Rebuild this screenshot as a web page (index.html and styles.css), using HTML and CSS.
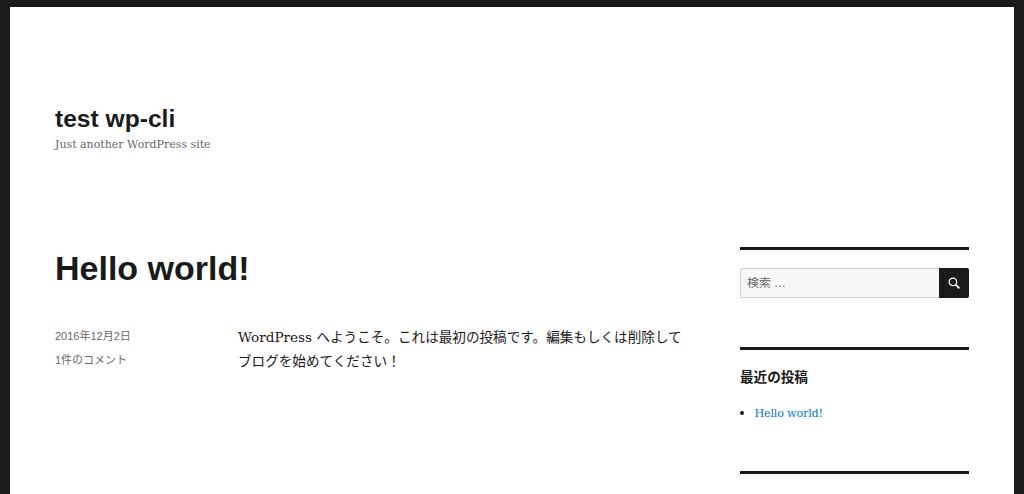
FILE: index.html
```html
<!DOCTYPE html>
<html lang="ja">
<head>
    <meta charset="UTF-8">
    <title>test wp-cli</title>
    <link rel="stylesheet" href="styles.css">
</head>
<body>
    <div class="site">
        <header class="site-header">
            <h1 class="site-title">test wp-cli</h1>
            <p class="site-description">Just another WordPress site</p>
        </header>

        <div class="site-inner">
            <main class="site-main">
                <h2 class="entry-title">Hello world!</h2>
                <div class="entry">
                    <div class="entry-meta">
                        <div class="meta-item">2016年12月2日</div>
                        <div class="meta-item">1件のコメント</div>
                    </div>
                    <div class="entry-content">
                        <p>WordPress へようこそ。これは最初の投稿です。編集もしくは削除してブログを始めてください！</p>
                    </div>
                </div>
            </main>

            <aside class="sidebar">
                <section class="widget widget-search">
                    <form class="search-form">
                        <input class="search-field" type="search" placeholder="検索 …">
                        <button class="search-submit" type="button" aria-label="検索">
                            <svg width="12" height="12" viewBox="0 0 16 16" fill="none" stroke="currentColor" stroke-width="1.6">
                                <circle cx="6.5" cy="6.5" r="5"></circle>
                                <path d="M10.2 10.2l5 5" stroke-width="2.4"></path>
                            </svg>
                        </button>
                    </form>
                </section>

                <section class="widget widget-recent">
                    <h2 class="widget-title">最近の投稿</h2>
                    <ul class="widget-list">
                        <li><a href="#">Hello world!</a></li>
                    </ul>
                </section>

                <section class="widget widget-last"></section>
            </aside>
        </div>
    </div>
</body>
</html>
```

FILE: styles.css
```css
body {
    margin: 0;
    padding: 7px 10px 0;
    background-color: #1a1a1a;
    color: #1a1a1a;
    font-family: "DejaVu Serif", "Noto Sans CJK JP", serif;
    font-size: 13.6px;
    line-height: 23.8px;
}

.site {
    background-color: white;
    height: 487px;
    padding: 0 45px;
}

.site-header {
    padding-top: 97px;
    height: 240px;
    box-sizing: border-box;
}

.site-title {
    margin: 0;
    font-family: "Liberation Sans", "Noto Sans CJK JP", sans-serif;
    font-size: 24.6px;
    line-height: 30px;
    font-weight: bold;
}

.site-description {
    margin: 0;
    font-size: 11px;
    line-height: 22px;
    color: #686868;
}

.site-inner {
    display: flex;
    justify-content: space-between;
}

.site-main {
    width: 640px;
}

.entry-title {
    margin: 0 0 36px;
    font-family: "Liberation Sans", "Noto Sans CJK JP", sans-serif;
    font-size: 34px;
    line-height: 42px;
    font-weight: bold;
}

.entry {
    display: flex;
}

.entry-meta {
    width: 183px;
    flex-shrink: 0;
    font-family: "Liberation Sans", "Noto Sans CJK JP", sans-serif;
    font-size: 11px;
    color: #686868;
}

.entry-content {
    padding-top: 1px;
}

.entry-content p {
    margin: 0;
    width: 450px;
}

.sidebar {
    width: 229px;
}

.widget {
    border-top: 3.5px solid #1a1a1a;
    padding-top: 18px;
}

.widget-search {
    margin-bottom: 49px;
}

.search-form {
    display: flex;
    height: 30px;
}

.search-field {
    flex: 1;
    min-width: 0;
    box-sizing: border-box;
    padding: 0 6px;
    border: 1px solid #d1d1d1;
    border-right: none;
    border-radius: 2px 0 0 2px;
    background-color: #f7f7f7;
    font-family: "Liberation Sans", "Noto Sans CJK JP", sans-serif;
    font-size: 11.9px;
}

.search-field::placeholder {
    color: #686868;
}

.search-submit {
    width: 30px;
    padding: 0;
    border: none;
    border-radius: 0 2px 2px 0;
    background-color: #1a1a1a;
    color: white;
    display: flex;
    align-items: center;
    justify-content: center;
}

.widget-recent {
    margin-bottom: 45px;
}

.widget-last {
    padding-top: 0;
}

.widget-title {
    margin: 0 0 13px;
    font-family: "Liberation Sans", "Noto Sans CJK JP", sans-serif;
    font-size: 13.6px;
    line-height: 20px;
    font-weight: bold;
}

.widget-list {
    margin: 0;
    padding-left: 14.5px;
}

.widget-list a {
    color: #007acc;
    font-size: 11.2px;
    letter-spacing: -0.2px;
    text-decoration: none;
}
```
